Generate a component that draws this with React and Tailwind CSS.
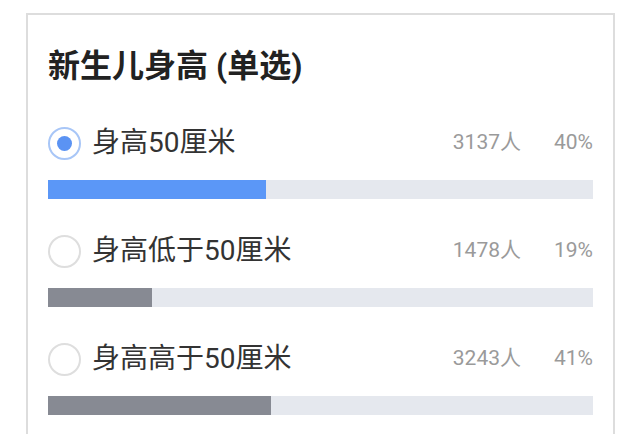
import React from "react";

const rows = [
  { label: "身高50厘米", count: "3137人", pct: 40, checked: true },
  { label: "身高低于50厘米", count: "1478人", pct: 19, checked: false },
  { label: "身高高于50厘米", count: "3243人", pct: 41, checked: false },
];

const font = { fontFamily: 'Roboto, "Noto Sans CJK SC", sans-serif' };

function Radio({ checked }) {
  if (checked) {
    return (
      <div className="flex h-[33px] w-[33px] shrink-0 items-center justify-center rounded-full border-2 border-[#a8c6f7] bg-white">
        <div className="h-[15px] w-[15px] rounded-full bg-[#5b93f3]" />
      </div>
    );
  }
  return <div className="h-[33px] w-[33px] shrink-0 rounded-full border-2 border-[#dedede] bg-white" />;
}

export default function App() {
  return (
    <div className="h-[434px] w-[640px] overflow-hidden bg-white" style={font}>
      <div className="ml-[26px] mt-[13px] h-[460px] w-[589px] border-2 border-[#dddddd] bg-white pl-[20px] pr-[20px] pt-[31px]">
        <div className="flex h-10 items-center text-[32px] font-bold text-[#222222]">
          新生儿身高 (单选)
        </div>
        <div className="mt-[37px] flex flex-col gap-[32px]">
          {rows.map((r) => (
            <div key={r.label} className="flex flex-col">
              <div className="flex h-10 items-center">
                <Radio checked={r.checked} />
                <span className="ml-[11px] text-[28px] text-[#333333]">{r.label}</span>
                <span className="ml-auto text-[21px] text-[#9a9a9a]">{r.count}</span>
                <span className="ml-[33px] text-[21px] text-[#9a9a9a]">{r.pct}%</span>
              </div>
              <div className="mt-[17px] h-[19px] w-full bg-[#e5e8ee]">
                <div
                  className={r.checked ? "h-full bg-[#5b97f7]" : "h-full bg-[#878a93]"}
                  style={{ width: `${r.pct}%` }}
                />
              </div>
            </div>
          ))}
        </div>
      </div>
    </div>
  );
}
